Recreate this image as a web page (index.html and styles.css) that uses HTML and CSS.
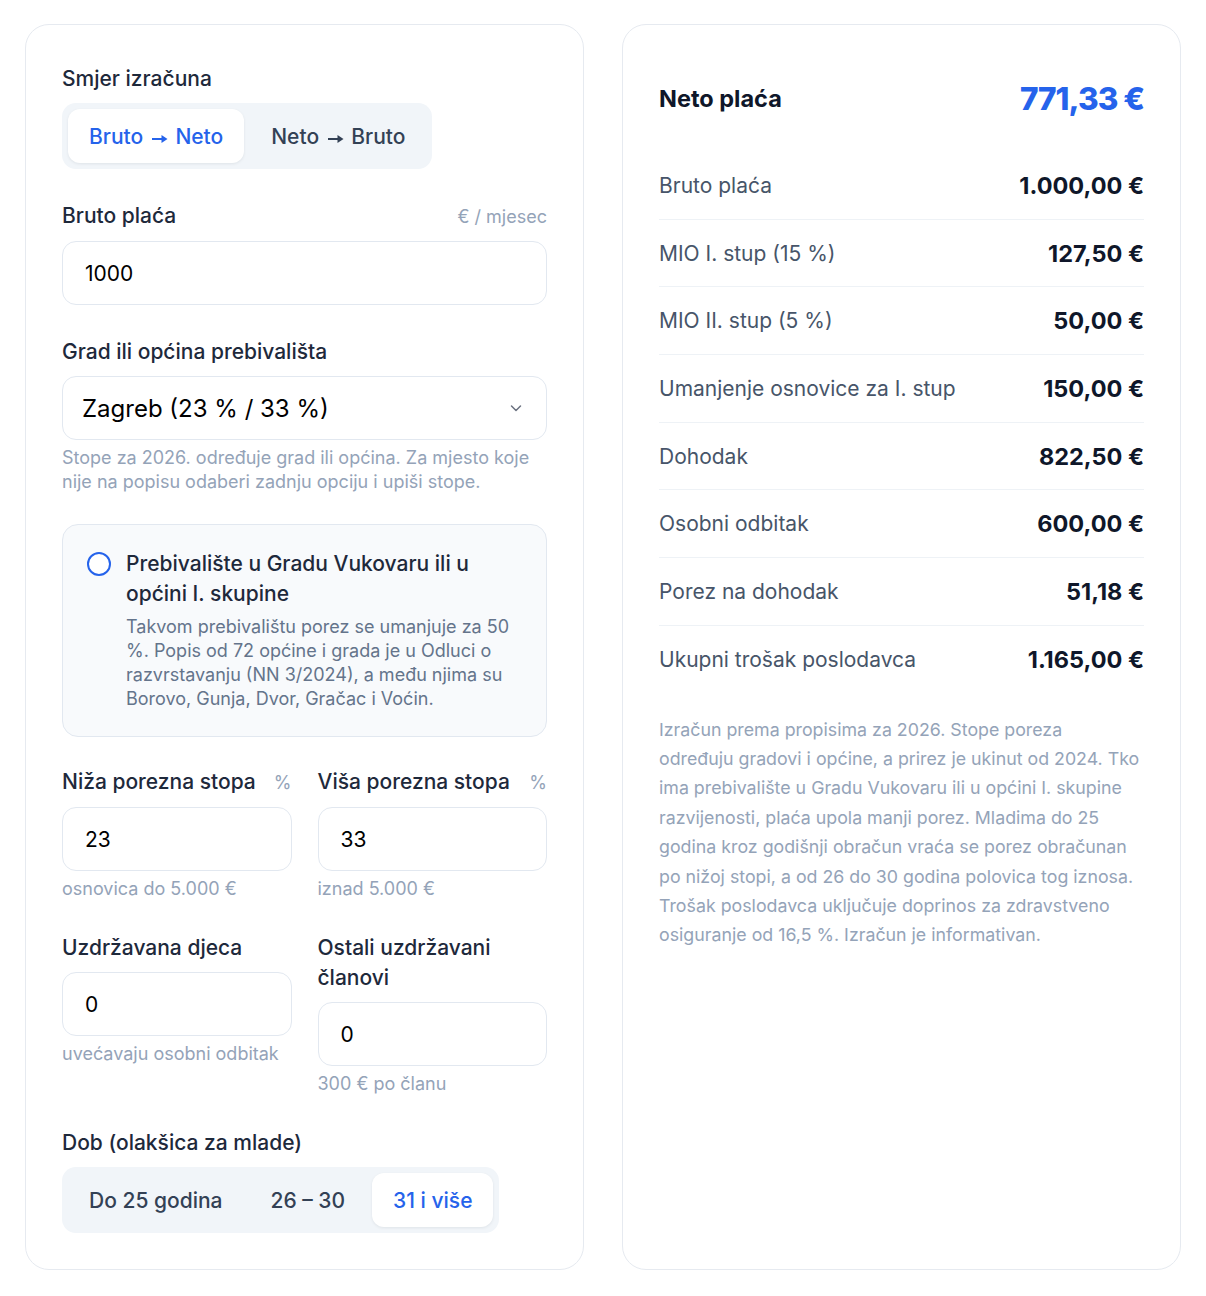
FILE: index.html
```html
<!DOCTYPE html>
<html lang="hr">
<head>
    <meta charset="UTF-8">
    <meta name="viewport" content="width=device-width, initial-scale=1.0">
    <title>Kalkulator plaće</title>
    <link rel="stylesheet" href="styles.css">
</head>
<body>
    <div class="layout">
        <!-- Unos podataka -->
        <div class="card form-card">
            <div class="field">
                <div class="field-label">Smjer izračuna</div>
                <div class="segmented">
                    <button class="seg-btn active">Bruto <svg class="arrow" width="17" height="12" viewBox="0 0 17 12"><path d="M1 6h10" stroke="currentColor" stroke-width="2"/><path d="M10.5 2L16.5 6L10.5 10z" fill="currentColor"/></svg> Neto</button>
                    <button class="seg-btn">Neto <svg class="arrow" width="17" height="12" viewBox="0 0 17 12"><path d="M1 6h10" stroke="currentColor" stroke-width="2"/><path d="M10.5 2L16.5 6L10.5 10z" fill="currentColor"/></svg> Bruto</button>
                </div>
            </div>

            <div class="field">
                <div class="field-label">
                    <span>Bruto plaća</span>
                    <span class="unit">€ / mjesec</span>
                </div>
                <input class="text-input" type="text" value="1000">
            </div>

            <div class="field">
                <div class="field-label">Grad ili općina prebivališta</div>
                <div class="select-wrap">
                    <select class="select-input">
                        <option>Zagreb (23 % / 33 %)</option>
                    </select>
                    <svg class="chevron" width="16" height="16" viewBox="0 0 16 16" fill="none">
                        <path d="M3.5 6l4.5 4.5L12.5 6" stroke="#6b7280" stroke-width="1.5" stroke-linecap="round" stroke-linejoin="round"/>
                    </svg>
                </div>
                <div class="hint">Stope za 2026. određuje grad ili općina. Za mjesto koje nije na popisu odaberi zadnju opciju i upiši stope.</div>
            </div>

            <label class="check-card">
                <span class="radio"></span>
                <span class="check-text">
                    <span class="check-title">Prebivalište u Gradu Vukovaru ili u općini I. skupine</span>
                    <span class="check-desc">Takvom prebivalištu porez se umanjuje za 50 %. Popis od 72 općine i grada je u Odluci o razvrstavanju (NN 3/2024), a među njima su Borovo, Gunja, Dvor, Gračac i Voćin.</span>
                </span>
            </label>

            <div class="field-grid">
                <div class="field">
                    <div class="field-label">
                        <span>Niža porezna stopa</span>
                        <span class="unit">%</span>
                    </div>
                    <input class="text-input" type="text" value="23">
                    <div class="hint">osnovica do 5.000 €</div>
                </div>
                <div class="field">
                    <div class="field-label">
                        <span>Viša porezna stopa</span>
                        <span class="unit">%</span>
                    </div>
                    <input class="text-input" type="text" value="33">
                    <div class="hint">iznad 5.000 €</div>
                </div>
                <div class="field">
                    <div class="field-label">Uzdržavana djeca</div>
                    <input class="text-input" type="text" value="0">
                    <div class="hint">uvećavaju osobni odbitak</div>
                </div>
                <div class="field">
                    <div class="field-label">Ostali uzdržavani članovi</div>
                    <input class="text-input" type="text" value="0">
                    <div class="hint">300 € po članu</div>
                </div>
            </div>

            <div class="field age-field">
                <div class="field-label">Dob (olakšica za mlade)</div>
                <div class="segmented">
                    <button class="seg-btn">Do 25 godina</button>
                    <button class="seg-btn">26 – 30</button>
                    <button class="seg-btn active">31 i više</button>
                </div>
            </div>
        </div>

        <!-- Rezultat -->
        <div class="card result-card">
            <div class="result-head">
                <span class="result-title">Neto plaća</span>
                <span class="result-total">771,33 €</span>
            </div>

            <div class="rows">
                <div class="row"><span>Bruto plaća</span><strong>1.000,00 €</strong></div>
                <div class="row"><span>MIO I. stup (15 %)</span><strong>127,50 €</strong></div>
                <div class="row"><span>MIO II. stup (5 %)</span><strong>50,00 €</strong></div>
                <div class="row"><span>Umanjenje osnovice za I. stup</span><strong>150,00 €</strong></div>
                <div class="row"><span>Dohodak</span><strong>822,50 €</strong></div>
                <div class="row"><span>Osobni odbitak</span><strong>600,00 €</strong></div>
                <div class="row"><span>Porez na dohodak</span><strong>51,18 €</strong></div>
                <div class="row"><span>Ukupni trošak poslodavca</span><strong>1.165,00 €</strong></div>
            </div>

            <p class="note">Izračun prema propisima za 2026. Stope poreza<br>određuju gradovi i općine, a prirez je ukinut od 2024. Tko ima prebivalište u Gradu Vukovaru ili u općini I. skupine razvijenosti, plaća upola manji porez. Mladima do 25 godina kroz godišnji obračun vraća se porez obračunan po nižoj stopi, a od 26 do 30 godina polovica tog iznosa. Trošak poslodavca uključuje doprinos za zdravstveno osiguranje od 16,5 %. Izračun je informativan.</p>
        </div>
    </div>
</body>
</html>
```

FILE: styles.css
```css
* {
    box-sizing: border-box;
}

body {
    margin: 0;
    padding: 24px 25px;
    background: #ffffff;
    font-family: Inter, "Noto Sans", Arial, sans-serif;
    color: #1e293b;
}

.layout {
    display: grid;
    grid-template-columns: 1fr 1fr;
    gap: 38px;
}

.card {
    background: #ffffff;
    border: 1px solid #e6eaf0;
    border-radius: 24px;
    padding: 37px 36px 36px;
}

/* Form */
.field + .field,
.field + .check-card,
.field-grid + .field {
    margin-top: 30px;
}

.check-card + .field-grid {
    margin-top: 28px;
}

.field-grid + .age-field {
    margin-top: 30px;
}

.field-label {
    display: flex;
    justify-content: space-between;
    align-items: baseline;
    padding-top: 2px;
    font-size: 21px;
    line-height: 30px;
    font-weight: 500;
    color: #1e293b;
    margin-bottom: 9px;
}

.unit {
    font-size: 18px;
    font-weight: 400;
    color: #94a3b8;
}

.segmented {
    display: inline-flex;
    gap: 6px;
    padding: 6px;
    background: #f1f5f9;
    border-radius: 14px;
}

.seg-btn {
    height: 54px;
    padding: 0 21px;
    border: none;
    background: transparent;
    border-radius: 12px;
    font-family: inherit;
    font-size: 21px;
    font-weight: 500;
    color: #334155;
    cursor: pointer;
}

.seg-btn.active {
    background: #ffffff;
    color: #2563eb;
    box-shadow: 0 1px 3px rgba(15, 23, 42, 0.08);
}

.arrow {
    margin: 0 2px;
    vertical-align: -1px;
}

.text-input,
.select-input {
    display: block;
    width: 100%;
    height: 64px;
    padding: 0 22px;
    border: 1px solid #e2e8f0;
    border-radius: 14px;
    background: #ffffff;
    font-family: Inter, "Noto Sans", Arial, sans-serif;
    font-size: 21px;
    color: #000000;
    outline: none;
}

.select-wrap {
    position: relative;
}

.select-input {
    appearance: none;
    -webkit-appearance: none;
    font-size: 24px;
    padding-left: 19px;
}

.chevron {
    position: absolute;
    right: 23px;
    top: 24px;
    pointer-events: none;
}

.hint {
    margin-top: 6px;
    font-size: 18px;
    line-height: 24px;
    color: #94a3b8;
}

/* Vukovar checkbox */
.check-card {
    display: flex;
    gap: 15px;
    padding: 24px 24px 25px;
    background: #f8fafc;
    border: 1px solid #e2e8f0;
    border-radius: 16px;
    cursor: pointer;
}

.radio {
    flex-shrink: 0;
    width: 24px;
    height: 24px;
    margin-top: 3px;
    border: 2px solid #2563eb;
    border-radius: 50%;
    background: #ffffff;
}

.check-text {
    display: flex;
    flex-direction: column;
}

.check-title {
    font-size: 21px;
    line-height: 30px;
    font-weight: 500;
    color: #1e293b;
}

.check-desc {
    margin-top: 6px;
    font-size: 18px;
    line-height: 24px;
    color: #64748b;
}

.field-grid {
    display: grid;
    grid-template-columns: 1fr 1fr;
    column-gap: 26px;
    row-gap: 30px;
}

.field-grid .field + .field {
    margin-top: 0;
}

/* Result */
.result-head {
    display: flex;
    justify-content: space-between;
    align-items: center;
    height: 72px;
    margin-bottom: 18px;
}

.result-title {
    font-size: 23.5px;
    font-weight: 700;
    color: #0f172a;
}

.result-total {
    font-size: 31.5px;
    font-weight: 800;
    letter-spacing: -1px;
    color: #2563eb;
}

.row {
    display: flex;
    justify-content: space-between;
    align-items: center;
    height: 67.7px;
    border-bottom: 1px solid #eef2f6;
    font-size: 21px;
    color: #475569;
}

.row:last-child {
    border-bottom: none;
}

.row strong {
    font-size: 23.5px;
    font-weight: 700;
    color: #0f172a;
}

.note {
    margin: 21px 0 0;
    font-size: 17.8px;
    line-height: 29.4px;
    color: #94a3b8;
}
```
